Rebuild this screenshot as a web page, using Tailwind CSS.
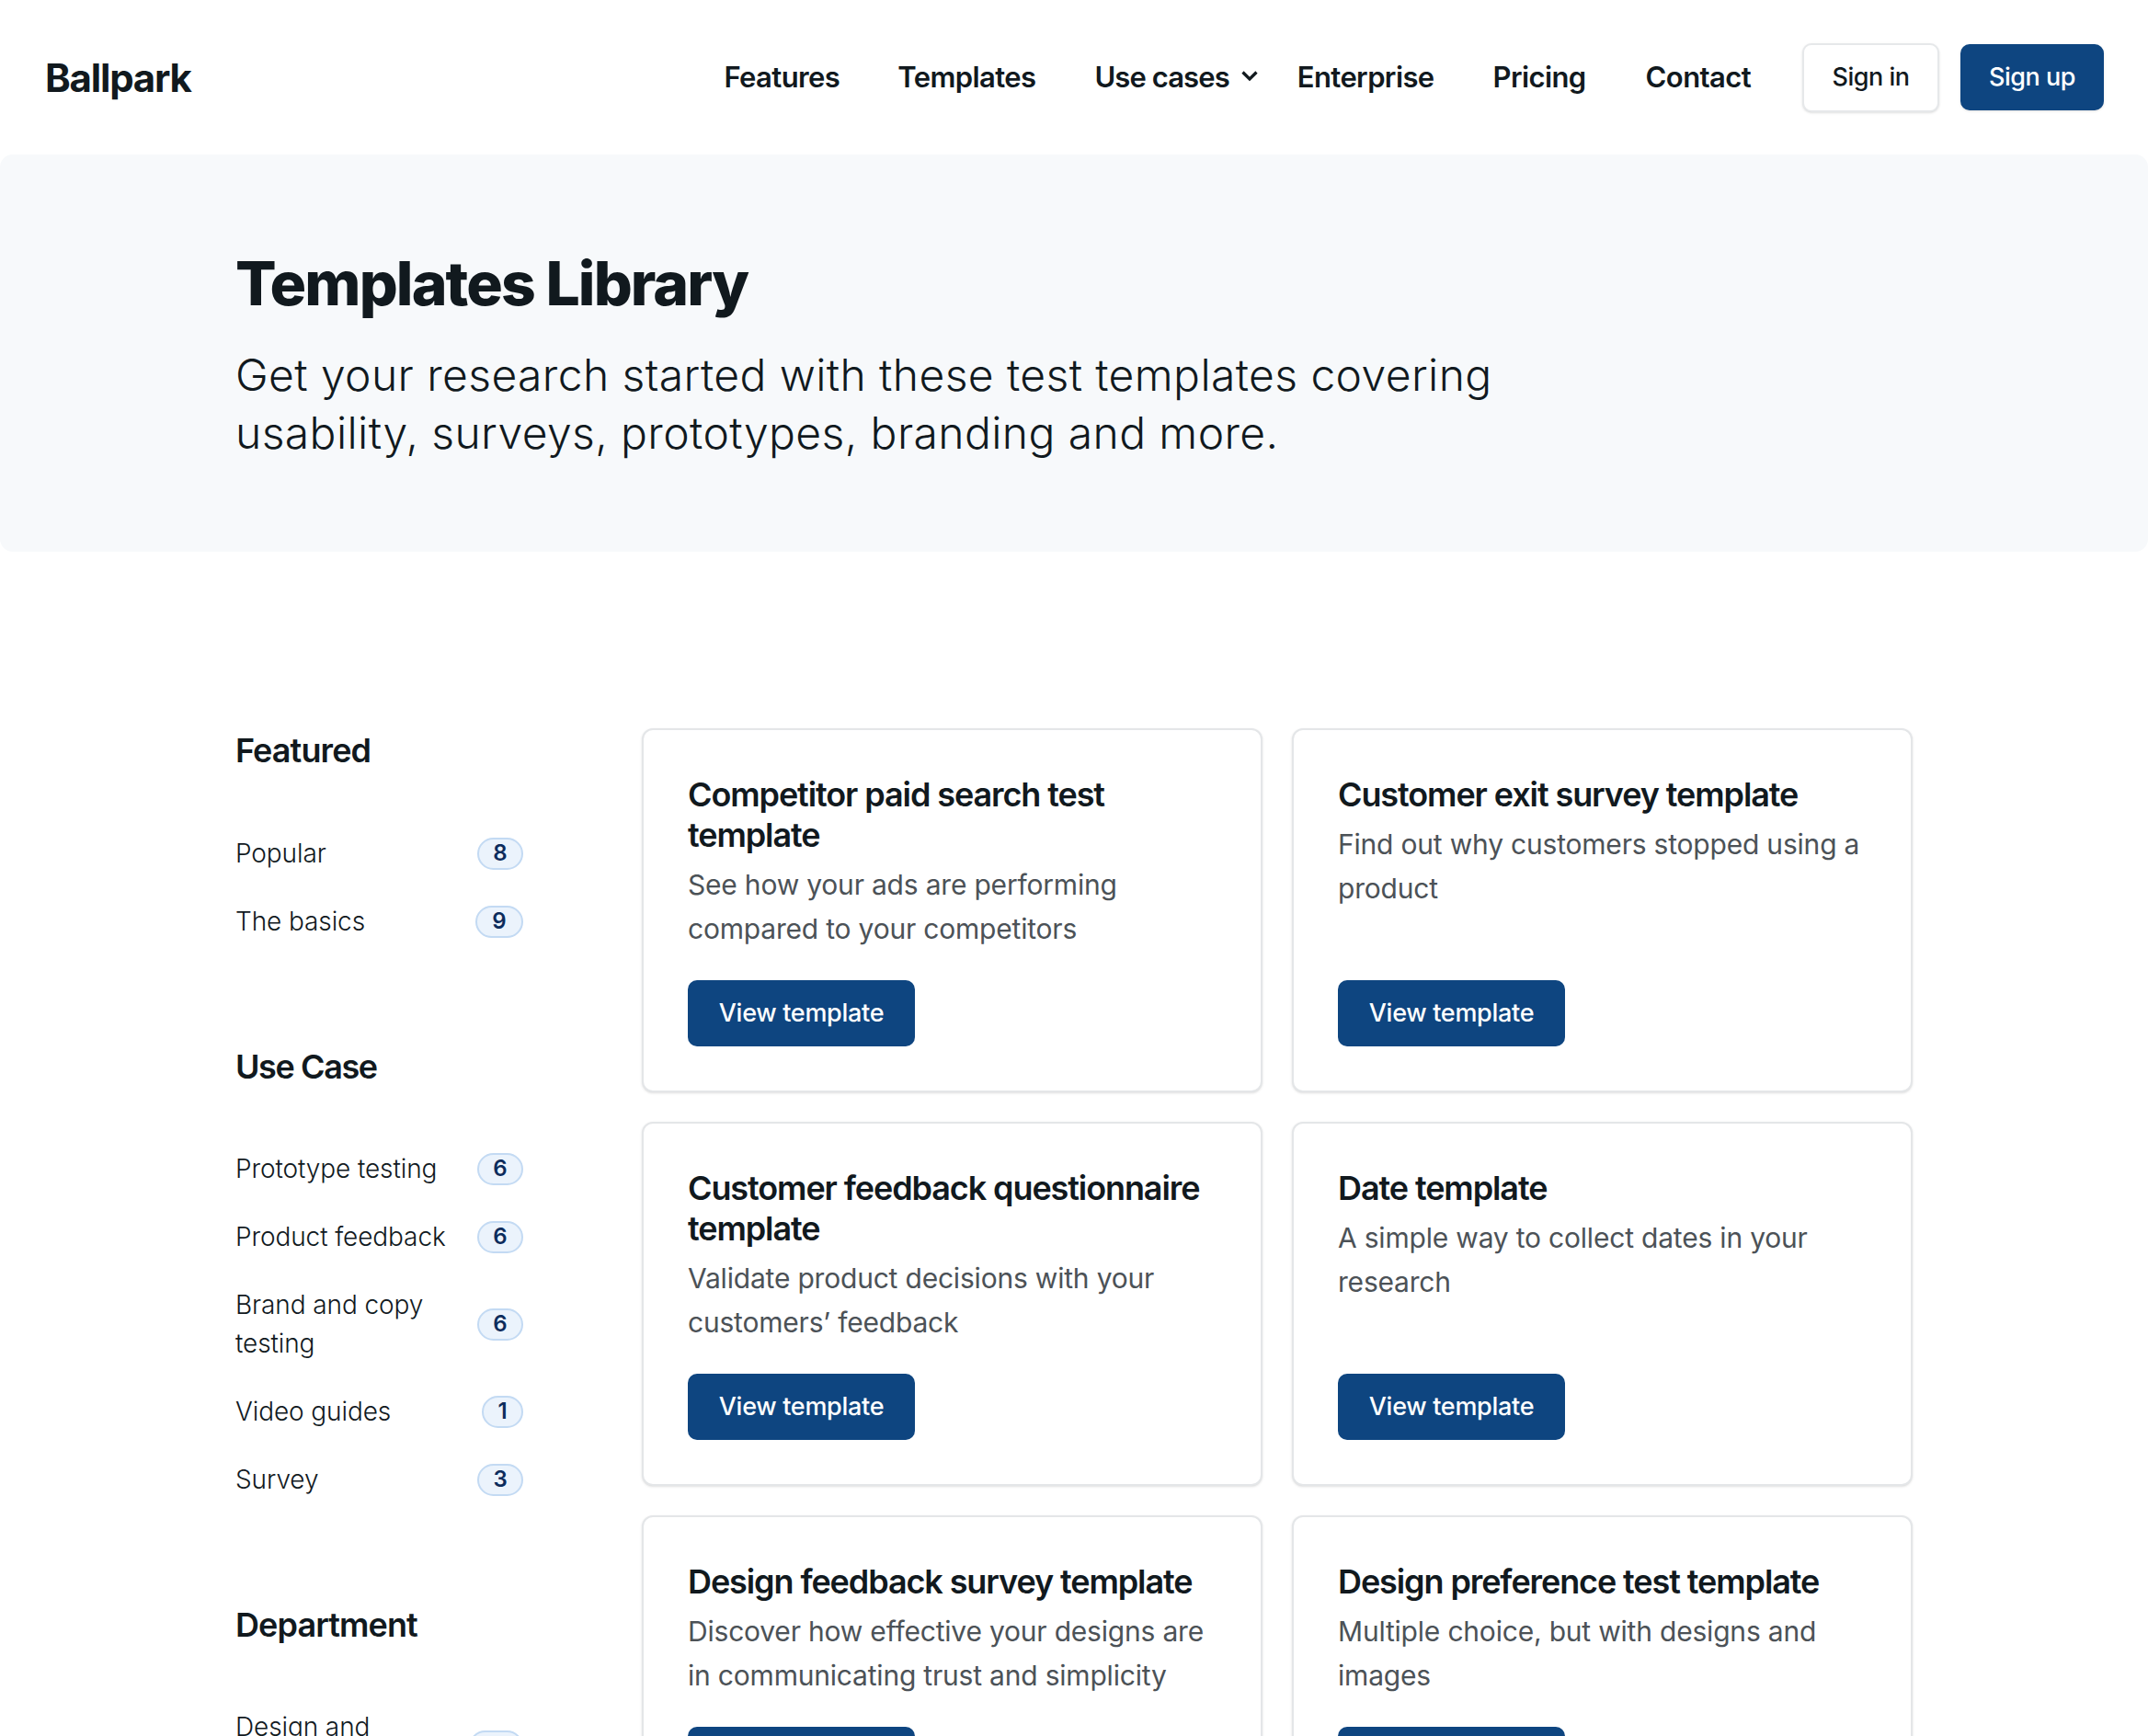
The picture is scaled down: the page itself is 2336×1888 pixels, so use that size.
<!DOCTYPE html>
<html lang="en">
  <head>
    <meta charset="UTF-8" />
    <title>Templates Library - Ballpark</title>
    <script src="https://cdn.jsdelivr.net/npm/@tailwindcss/browser@4"></script>
  </head>
  <body class="bg-white font-['Inter',sans-serif] text-[#11191e]">
    <div class="h-[1888px] overflow-hidden">
      <!-- Header -->
      <header class="h-[168px] flex items-center justify-between pl-[49px] pr-[48px]">
        <a class="text-[42px] font-bold tracking-[-1.2px]">Ballpark</a>
        <nav class="flex items-center">
          <a class="text-[31px] font-semibold tracking-[-0.6px] mr-[63px]">Features</a>
          <a class="text-[31px] font-semibold tracking-[-0.6px] mr-[64px]">Templates</a>
          <a class="text-[31px] font-semibold tracking-[-0.9px] flex items-center gap-[12px] mr-[42px]">
            Use cases
            <svg class="w-[20px] h-[13px] -mt-[4px]" viewBox="0 0 20 13" fill="none" stroke="#11191e" stroke-width="3.2"><path d="M2.5 2.5l7.5 7.5 7.5-7.5" /></svg>
          </a>
          <a class="text-[31px] font-semibold tracking-[-0.6px] mr-[64px]">Enterprise</a>
          <a class="text-[31px] font-semibold tracking-[-0.6px] mr-[65px]">Pricing</a>
          <a class="text-[31px] font-semibold tracking-[-0.6px] mr-[56px]">Contact</a>
          <a class="w-[149px] h-[75px] flex items-center justify-center bg-white border-2 border-[#e6e8ea] rounded-[10px] shadow-sm text-[27px] font-medium tracking-[-0.5px] mr-[23px]">Sign in</a>
          <a class="w-[156px] h-[72px] flex items-center justify-center bg-[#0e4580] rounded-[10px] shadow-sm text-white text-[27px] font-medium tracking-[-0.5px]">Sign up</a>
        </nav>
      </header>

      <!-- Hero -->
      <section class="h-[432px] bg-[#f7f9fb] rounded-[14px] pl-[256px] pt-[104px]">
        <h1 class="text-[66px] leading-[72px] font-extrabold tracking-[-1.9px]">Templates Library</h1>
        <p class="mt-[32px] w-[1500px] text-[48px] leading-[63px] font-light tracking-[0.4px] text-[#11191e]">Get your research started with these test templates covering<br />usability, surveys, prototypes, branding and more.</p>
      </section>

      <main class="flex pl-[256px] pr-[256px] pt-[192px]">
        <!-- Sidebar -->
        <aside class="w-[313px] mr-[129px] shrink-0 pt-[2px]">
          <h2 class="text-[36px] leading-[44px] font-semibold tracking-[-0.9px] mb-[69px]">Featured</h2>
          <ul class="flex flex-col gap-[32px] text-[28px] leading-[42px] font-light tracking-[-0.1px] mb-[115px]">
            <li class="flex items-center justify-between"><span>Popular</span><span class="w-[50px] h-[35px] flex items-center justify-center rounded-full bg-[#ebf3fc] border-2 border-[#c3daf3] text-[24px] font-semibold text-[#0d2c5c]">8</span></li>
            <li class="flex items-center justify-between"><span>The basics</span><span class="w-[52px] h-[35px] flex items-center justify-center rounded-full bg-[#ebf3fc] border-2 border-[#c3daf3] text-[24px] font-semibold text-[#0d2c5c]">9</span></li>
          </ul>

          <h2 class="text-[36px] leading-[44px] font-semibold tracking-[-1.4px] mb-[68px]">Use Case</h2>
          <ul class="flex flex-col gap-[32px] text-[28px] leading-[42px] font-light tracking-[-0.1px] mb-[115px]">
            <li class="flex items-center justify-between"><span>Prototype testing</span><span class="w-[50px] h-[35px] flex items-center justify-center rounded-full bg-[#ebf3fc] border-2 border-[#c3daf3] text-[24px] font-semibold text-[#0d2c5c]">6</span></li>
            <li class="flex items-center justify-between"><span>Product feedback</span><span class="w-[50px] h-[35px] flex items-center justify-center rounded-full bg-[#ebf3fc] border-2 border-[#c3daf3] text-[24px] font-semibold text-[#0d2c5c]">6</span></li>
            <li class="flex items-center justify-between"><span class="w-[240px]">Brand and copy testing</span><span class="w-[50px] h-[35px] flex items-center justify-center rounded-full bg-[#ebf3fc] border-2 border-[#c3daf3] text-[24px] font-semibold text-[#0d2c5c]">6</span></li>
            <li class="flex items-center justify-between"><span>Video guides</span><span class="w-[45px] h-[35px] flex items-center justify-center rounded-full bg-[#ebf3fc] border-2 border-[#c3daf3] text-[24px] font-semibold text-[#0d2c5c]">1</span></li>
            <li class="flex items-center justify-between"><span>Survey</span><span class="w-[50px] h-[35px] flex items-center justify-center rounded-full bg-[#ebf3fc] border-2 border-[#c3daf3] text-[24px] font-semibold text-[#0d2c5c]">3</span></li>
          </ul>

          <h2 class="text-[36px] leading-[44px] font-semibold tracking-[-0.9px] mb-[68px]">Department</h2>
          <ul class="flex flex-col gap-[32px] text-[28px] leading-[42px] font-light tracking-[-0.1px]">
            <li class="flex items-center justify-between"><span class="w-[200px]">Design and research</span><span class="w-[59px] h-[35px] rounded-full bg-[#ebf3fc] border-2 border-[#c3daf3]"></span></li>
          </ul>
        </aside>

        <!-- Template cards -->
        <div class="grid grid-cols-2 gap-[32px] flex-1 content-start">
          <article class="flex flex-col items-start bg-white border-2 border-[#e4e6e8] rounded-[12px] shadow-sm pt-[48px] px-[48px] pb-[48px]">
            <h3 class="text-[36px] leading-[44px] font-semibold tracking-[-1.1px]">Competitor paid search test template</h3>
            <p class="mt-[8px] mb-[32px] text-[30px] leading-[48px] tracking-[-0.2px] text-[#4c5257]">See how your ads are performing compared to your competitors</p>
            <a class="mt-auto w-[247px] h-[72px] flex items-center justify-center bg-[#0e4580] rounded-[10px] text-white text-[27px] font-medium tracking-[-0.3px]">View template</a>
          </article>
          <article class="flex flex-col items-start bg-white border-2 border-[#e4e6e8] rounded-[12px] shadow-sm pt-[48px] px-[48px] pb-[48px]">
            <h3 class="text-[36px] leading-[44px] font-semibold tracking-[-1.1px]">Customer exit survey template</h3>
            <p class="mt-[8px] mb-[32px] text-[30px] leading-[48px] tracking-[-0.2px] text-[#4c5257]">Find out why customers stopped using a product</p>
            <a class="mt-auto w-[247px] h-[72px] flex items-center justify-center bg-[#0e4580] rounded-[10px] text-white text-[27px] font-medium tracking-[-0.3px]">View template</a>
          </article>
          <article class="flex flex-col items-start bg-white border-2 border-[#e4e6e8] rounded-[12px] shadow-sm pt-[48px] px-[48px] pb-[48px]">
            <h3 class="text-[36px] leading-[44px] font-semibold tracking-[-1.1px]">Customer feedback questionnaire template</h3>
            <p class="mt-[8px] mb-[32px] text-[30px] leading-[48px] tracking-[-0.2px] text-[#4c5257]">Validate product decisions with your customers’ feedback</p>
            <a class="mt-auto w-[247px] h-[72px] flex items-center justify-center bg-[#0e4580] rounded-[10px] text-white text-[27px] font-medium tracking-[-0.3px]">View template</a>
          </article>
          <article class="flex flex-col items-start bg-white border-2 border-[#e4e6e8] rounded-[12px] shadow-sm pt-[48px] px-[48px] pb-[48px]">
            <h3 class="text-[36px] leading-[44px] font-semibold tracking-[-1.1px]">Date template</h3>
            <p class="mt-[8px] mb-[32px] text-[30px] leading-[48px] tracking-[-0.2px] text-[#4c5257]">A simple way to collect dates in your research</p>
            <a class="mt-auto w-[247px] h-[72px] flex items-center justify-center bg-[#0e4580] rounded-[10px] text-white text-[27px] font-medium tracking-[-0.3px]">View template</a>
          </article>
          <article class="flex flex-col items-start bg-white border-2 border-[#e4e6e8] rounded-[12px] shadow-sm pt-[48px] px-[48px] pb-[48px]">
            <h3 class="text-[36px] leading-[44px] font-semibold tracking-[-1.1px]">Design feedback survey template</h3>
            <p class="mt-[8px] mb-[32px] text-[30px] leading-[48px] tracking-[-0.2px] text-[#4c5257]">Discover how effective your designs are in communicating trust and simplicity</p>
            <a class="mt-auto w-[247px] h-[72px] flex items-center justify-center bg-[#0e4580] rounded-[10px] text-white text-[27px] font-medium tracking-[-0.3px]">View template</a>
          </article>
          <article class="flex flex-col items-start bg-white border-2 border-[#e4e6e8] rounded-[12px] shadow-sm pt-[48px] px-[48px] pb-[48px]">
            <h3 class="text-[36px] leading-[44px] font-semibold tracking-[-1.1px]">Design preference test template</h3>
            <p class="mt-[8px] mb-[32px] text-[30px] leading-[48px] tracking-[-0.2px] text-[#4c5257]">Multiple choice, but with designs and images</p>
            <a class="mt-auto w-[247px] h-[72px] flex items-center justify-center bg-[#0e4580] rounded-[10px] text-white text-[27px] font-medium tracking-[-0.3px]">View template</a>
          </article>
        </div>
      </main>
    </div>
  </body>
</html>
